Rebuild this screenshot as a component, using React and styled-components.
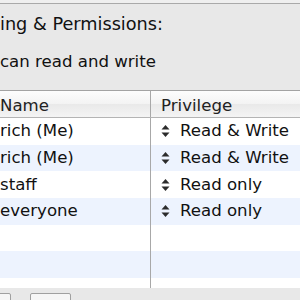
import React from 'react'
import styled, { createGlobalStyle } from 'styled-components'

const GlobalStyle = createGlobalStyle`
  html, body {
    margin: 0;
    padding: 0;
    background: #e8e8e8;
  }
  body {
    font-family: "DejaVu Sans", "Liberation Sans", sans-serif;
    color: #111;
  }
`

const rows = [
  { name: 'rich (Me)', privilege: 'Read & Write' },
  { name: 'rich (Me)', privilege: 'Read & Write' },
  { name: 'staff', privilege: 'Read only' },
  { name: 'everyone', privilege: 'Read only' },
  { name: '', privilege: '' },
  { name: '', privilege: '' },
  { name: '', privilege: '', short: true },
]

const StepperIcon = () => (
  <svg width="9" height="14" viewBox="0 0 9 14">
    <path d="M4.5 1 L8.5 5.5 L0.5 5.5 Z" fill="#2b2b2b" />
    <path d="M4.5 13 L8.5 8.5 L0.5 8.5 Z" fill="#2b2b2b" />
  </svg>
)

const App = () => {
  return (
    <StWindow>
      <GlobalStyle />
      <StTopBar />
      <StSection>
        <StHeading>ing &amp; Permissions:</StHeading>
        <StSubtitle>can read and write</StSubtitle>
      </StSection>
      <StTable>
        <StHeaderRow>
          <StNameCell>Name</StNameCell>
          <StPrivCell>Privilege</StPrivCell>
        </StHeaderRow>
        {rows.map((row, i) => (
          <StRow key={i} $alt={i % 2 === 1} $short={row.short}>
            <StNameCell>{row.name}</StNameCell>
            <StPrivCell>
              {row.privilege && (
                <>
                  <StepperIcon />
                  <StPrivText>{row.privilege}</StPrivText>
                </>
              )}
            </StPrivCell>
          </StRow>
        ))}
      </StTable>
      <StFooter>
        <StButton $width={31} $cut />
        <StButton $width={41} />
      </StFooter>
    </StWindow>
  )
}

export default App

const StWindow = styled.div`
  width: 300px;
  height: 300px;
  overflow: hidden;
  background: #e8e8e8;
  display: flex;
  flex-direction: column;
`

const StTopBar = styled.div`
  height: 3px;
  background: #efefef;
  border-bottom: 1px solid #a9a9a9;
  flex-shrink: 0;
`

const StSection = styled.div`
  padding-top: 10px;
  height: 86px;
  box-sizing: border-box;
  flex-shrink: 0;
`

const StHeading = styled.div`
  font-size: 17.7px;
  line-height: 20px;
  white-space: nowrap;
`

const StSubtitle = styled.div`
  margin-top: 18px;
  font-size: 16.6px;
  line-height: 20px;
  white-space: nowrap;
`

const StTable = styled.div`
  background: #fff;
  border-top: 1px solid #a3a3a3;
  display: flex;
  flex-direction: column;
  flex-shrink: 0;
`

const StHeaderRow = styled.div`
  display: grid;
  grid-template-columns: 151px 1fr;
  height: 26px;
  background: linear-gradient(#fdfdfd, #f3f3f3 50%, #e9e9e9 51%, #f4f4f4);
  border-bottom: 1px solid #b4b4b4;
  font-size: 16.6px;
  line-height: 20px;
  color: #222;

  & > div {
    padding-top: 5px;
    align-items: flex-start;
  }
`

const StRow = styled.div`
  display: grid;
  grid-template-columns: 151px 1fr;
  height: ${(p) => (p.$short ? '10px' : '26.67px')};
  background: ${(p) => (p.$alt ? '#edf3fe' : '#fff')};
  font-size: 16.6px;
  line-height: 20px;
  overflow: hidden;
`

const StNameCell = styled.div`
  display: flex;
  align-items: center;
  border-right: 1px solid #a8a8a8;
  white-space: nowrap;
  box-sizing: border-box;
`

const StPrivCell = styled.div`
  display: flex;
  align-items: center;
  padding-left: 10px;
  gap: 10px;
  white-space: nowrap;
`

const StPrivText = styled.span`
  color: #111;
`

const StFooter = styled.div`
  display: flex;
  gap: 19px;
  padding-top: 5px;
  flex-shrink: 0;
`

const StButton = styled.div`
  width: ${(p) => p.$width}px;
  height: 20px;
  margin-left: ${(p) => (p.$cut ? '-20px' : '0')};
  background: #f6f6f6;
  border: 1px solid #a0a0a0;
  border-radius: 2px;
  box-sizing: border-box;
`
